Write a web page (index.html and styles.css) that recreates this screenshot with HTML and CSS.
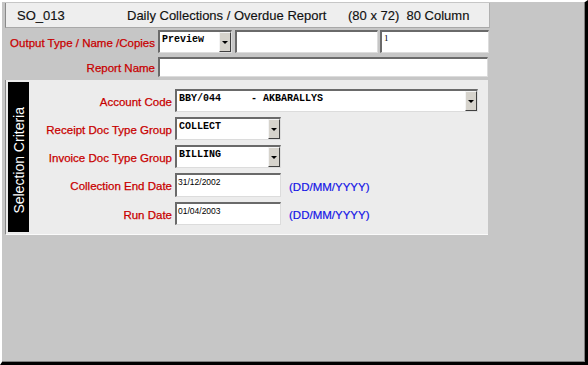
FILE: index.html
```html
<!DOCTYPE html>
<html lang="en">
<head>
    <meta charset="UTF-8">
    <title>SO_013 Daily Collections / Overdue Report</title>
    <link rel="stylesheet" href="styles.css">
</head>
<body>
    <div class="window">
        <div class="titlebar">
            <span class="code">SO_013</span>
            <span class="title">Daily Collections / Overdue Report</span>
            <span class="size">(80 x 72)&nbsp; 80 Column</span>
        </div>

        <!-- output settings -->
        <div class="output">
            <div class="row row-first">
                <label class="lbl lbl-out">Output Type / Name /Copies</label>
                <div class="combo combo-type"><span class="combo-text">Preview</span><span class="drop"></span></div>
                <div class="field field-name"></div>
                <div class="field field-copies">1</div>
            </div>
            <div class="row row-second">
                <label class="lbl lbl-out">Report Name</label>
                <div class="field field-report"></div>
            </div>
        </div>

        <!-- selection criteria -->
        <div class="criteria">
            <div class="criteria-tab"><span>Selection Criteria</span></div>
            <div class="criteria-rows">
                <div class="crow">
                    <label class="lbl lbl-crit">Account Code</label>
                    <div class="combo combo-account"><span class="combo-text">BBY/044     - AKBARALLYS</span><span class="drop"></span></div>
                </div>
                <div class="crow">
                    <label class="lbl lbl-crit">Receipt Doc Type Group</label>
                    <div class="combo combo-small"><span class="combo-text">COLLECT</span><span class="drop"></span></div>
                </div>
                <div class="crow">
                    <label class="lbl lbl-crit">Invoice Doc Type Group</label>
                    <div class="combo combo-small"><span class="combo-text">BILLING</span><span class="drop"></span></div>
                </div>
                <div class="crow crow-date">
                    <label class="lbl lbl-crit">Collection End Date</label>
                    <div class="field field-date">31/12/2002</div>
                    <span class="hint">(DD/MM/YYYY)</span>
                </div>
                <div class="crow">
                    <label class="lbl lbl-crit">Run Date</label>
                    <div class="field field-date">01/04/2003</div>
                    <span class="hint">(DD/MM/YYYY)</span>
                </div>
            </div>
        </div>
    </div>
</body>
</html>
```

FILE: styles.css
```css
html, body { margin: 0; padding: 0; }
body { font-family: "Liberation Sans", Arial, sans-serif; background: #c6c6c6; }
.window { width: 588px; height: 365px; box-sizing: border-box; background: #c6c6c6; border-top: 2px solid #fff; border-left: 2px solid #fff; border-right: 3px solid #000; border-bottom: 3px solid #000; box-shadow: inset -1px -1px 0 #808080; padding: 1px 0 0 3px; }

.titlebar { width: 485px; height: 25px; box-sizing: border-box; background: #eeeeee; border-left: 1px solid #8a8a8a; border-bottom: 1px solid #a8a8a8; border-right: 1px solid #b0b0b0; display: flex; align-items: center; font-size: 13px; color: #111; -webkit-text-stroke: 0.15px #111; }
.titlebar .code { margin-left: 11px; width: 110px; }
.titlebar .title { width: 221px; }

.output { margin-top: 2px; }
.row { display: flex; align-items: center; }
.row-first { height: 23px; }
.row-second { height: 20px; margin-top: 4px; }
.lbl { color: #c80000; font-size: 11.5px; text-align: right; box-sizing: border-box; -webkit-text-stroke: 0.25px #c80000; }
.lbl-out { width: 150px; margin-right: 3px; padding-top: 2px; }
.lbl-crit { width: 143px; margin-right: 3px; padding-top: 2px; }

.field, .combo { box-sizing: border-box; height: 100%; background: #fff; border-top: 2px solid #6a6a6a; border-left: 2px solid #6a6a6a; border-right: 1px solid #dcdcdc; border-bottom: 1px solid #dcdcdc; }
.field { font-family: "Liberation Serif", serif; font-size: 9px; padding: 1px 2px; color: #000; }
.field-name { width: 143px; margin-left: 3px; }
.field-copies { width: 109px; margin-left: 2px; }
.field-report { width: 330px; }
.field-date { width: 106px; font-family: "Liberation Sans", Arial, sans-serif; font-size: 8.5px; padding: 2px 1px; }

.combo { display: flex; justify-content: space-between; }
.combo-text { font-family: "Liberation Mono", "Courier New", monospace; font-weight: bold; font-size: 10px; line-height: 12px; padding: 2px 0 0 2px; white-space: pre; color: #000; }
.drop { width: 12px; box-sizing: border-box; background: #d6d3cc; border-left: 1px solid #f4f4f4; border-top: 1px solid #f4f4f4; border-right: 1px solid #404040; border-bottom: 1px solid #404040; display: flex; align-items: center; justify-content: center; }
.drop::after { content: ""; border-left: 3px solid transparent; border-right: 3px solid transparent; border-top: 3px solid #000; }
.combo-type { width: 74px; }
.combo-account { width: 303px; }
.combo-small { width: 106px; }

.criteria { margin-top: 3px; width: 483px; height: 155px; box-sizing: border-box; background: #ececec; border-left: 1px solid #8a8a8a; border-bottom: 1px solid #fafafa; display: flex; padding: 2px 0 2px 2px; }
.criteria-tab { width: 21px; background: #000; display: flex; align-items: center; justify-content: center; }
.criteria-tab span { writing-mode: vertical-rl; transform: rotate(180deg); color: #fff; font-size: 14px; white-space: nowrap; padding-bottom: 6px; }
.criteria-rows { display: flex; flex-direction: column; padding-top: 7px; }
.crow { display: flex; align-items: center; height: 23px; margin-bottom: 5px; }
.crow-date { height: 24px; }
.hint { color: #1414e6; font-size: 11.5px; margin-left: 8px; padding-top: 3px; -webkit-text-stroke: 0.2px #1414e6; }
```
